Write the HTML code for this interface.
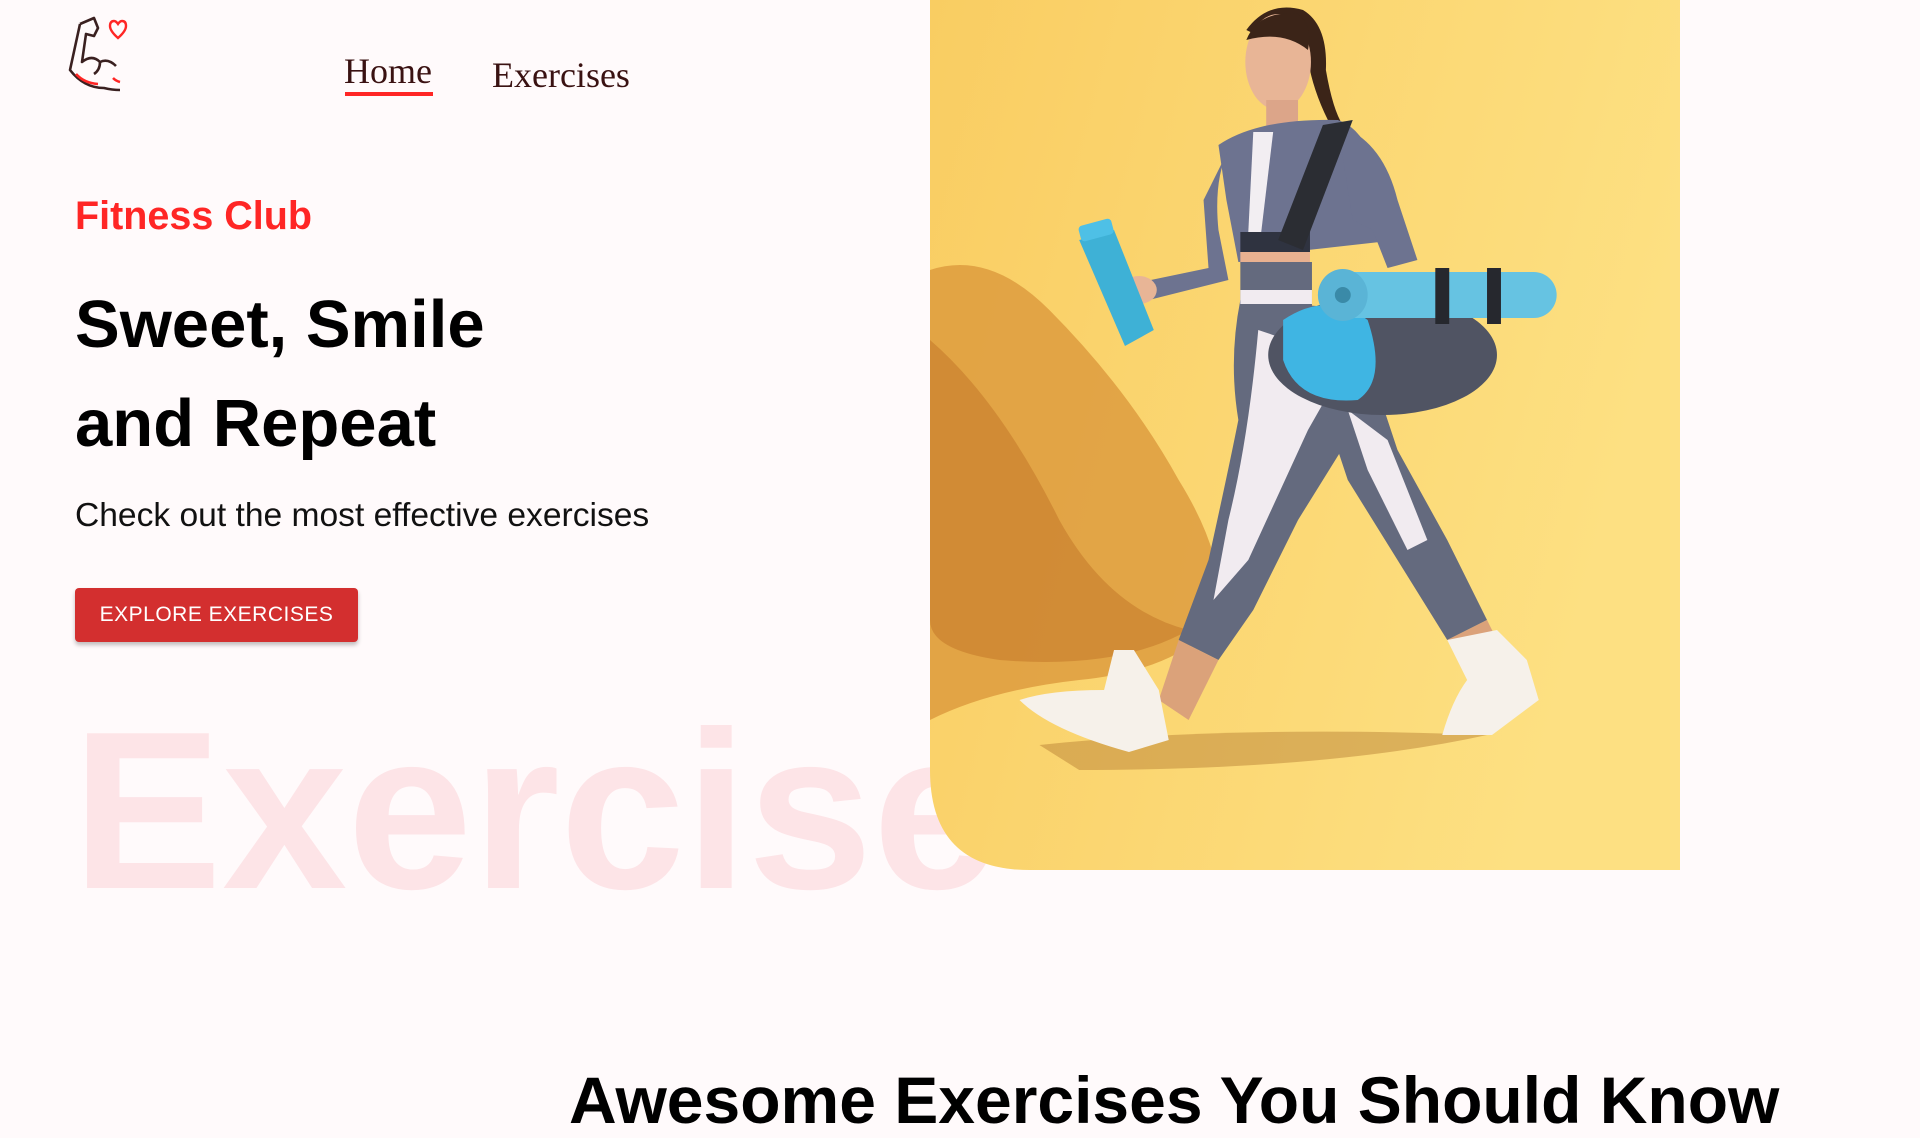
<!DOCTYPE html>
<html><head><meta charset="utf-8"><style>
*{margin:0;padding:0;box-sizing:border-box}
body{width:1920px;height:1080px;overflow:hidden;background:#fffafb;position:relative;font-family:"Liberation Sans",Arial,sans-serif}
.abs{position:absolute}
.nav{font-family:"Liberation Serif",serif;font-size:36px;color:#3a1212}
.btn{left:75px;top:588px;width:283px;height:54px;background:#d32f2f;color:#fff;font-size:21px;border-radius:4px;display:flex;align-items:center;justify-content:center;letter-spacing:.5px;box-shadow:0 3px 4px rgba(0,0,0,.25)}
</style></head><body>
<svg class="abs" style="left:58px;top:16px" width="76" height="76" viewBox="0 0 76 76">
<path d="M22 8 L36 2 L40 12 L36 20 L28 18 L24 46 Q34 38 42 46 Q50 42 58 50" fill="none" stroke="#3a2020" stroke-width="2.6" stroke-linejoin="round"/>
<path d="M42 46 Q42 54 36 58" fill="none" stroke="#3a2020" stroke-width="2.6"/>
<path d="M22 8 L12 54 Q26 72 46 72 Q54 74 62 74" fill="none" stroke="#3a2020" stroke-width="2.6" stroke-linejoin="round"/>
<path d="M18 58 Q26 67 40 68" fill="none" stroke="#ff2625" stroke-width="2.6"/>
<path d="M55 62 Q58 65 62 66" fill="none" stroke="#ff2625" stroke-width="2.6"/>
<path d="M60 22 Q52 15 52 10 Q52 5 56 5 Q58 5 60 8 Q62 5 64 5 Q68 5 68 10 Q68 15 60 22 Z" fill="none" stroke="#ff2625" stroke-width="2.4"/>
</svg>
<div class="abs nav" style="left:344px;top:50px">Home</div>
<div class="abs" style="left:345px;top:92px;width:88px;height:4px;background:#ff2625"></div>
<div class="abs nav" style="left:492px;top:54px">Exercises</div>

<div class="abs" style="left:75px;top:194px;font-size:39.5px;font-weight:bold;color:#ff2625">Fitness Club</div>
<div class="abs" style="left:75px;top:275px;font-size:67px;font-weight:bold;color:#000;line-height:99px">Sweet, Smile<br>and Repeat</div>
<div class="abs" style="left:75px;top:497px;font-size:33.6px;color:#111">Check out the most effective exercises</div>
<div class="abs btn">EXPLORE EXERCISES</div>

<div class="abs" style="left:72px;top:690px;font-size:225px;font-weight:bold;color:#fde4e7;line-height:240px">Exercise</div>

<svg class="abs" style="left:930px;top:0" width="750" height="870" viewBox="0 0 754 870" preserveAspectRatio="none">
<defs>
<clipPath id="c"><path d="M0 0 H754 V870 H100 Q0 870 0 770 Z"/></clipPath>
<linearGradient id="bg" x1="0" y1="0" x2="1" y2="0.3"><stop offset="0" stop-color="#f9cd62"/><stop offset="1" stop-color="#fde082"/></linearGradient>
</defs>
<g clip-path="url(#c)">
<rect width="754" height="870" fill="url(#bg)"/>
<path d="M0 270 Q60 250 120 310 Q200 390 250 480 Q300 560 290 620 Q250 670 150 680 Q60 690 0 720 Z" fill="#dc983c" opacity=".8"/>
<path d="M0 340 Q70 400 130 520 Q180 610 260 630 Q190 670 70 660 Q0 650 0 620Z" fill="#c77c2b" opacity=".6"/>
<path d="M110 745 Q300 725 560 735 Q400 770 150 770Z" fill="#b37a30" opacity=".45"/>
<path d="M318 30 Q340 0 375 10 Q400 25 398 70 Q405 110 415 125 L400 120 Q385 90 380 60Z" fill="#3b2418"/>
<ellipse cx="350" cy="62" rx="33" ry="48" fill="#e8b596"/>
<path d="M318 40 Q330 10 370 14 Q385 25 380 50 Q355 30 318 40Z" fill="#3b2418"/>
<rect x="338" y="100" width="32" height="30" fill="#dca589"/>
<path d="M290 145 Q330 118 410 120 Q440 130 450 180 L470 240 L380 250 L375 260 L310 262 L298 200 Z" fill="#6d7390"/>
<path d="M325 132 L345 132 L333 232 L320 232Z" fill="#f2eef2"/>
<rect x="312" y="232" width="70" height="20" fill="#2f3340"/>
<rect x="312" y="252" width="70" height="12" fill="#e9b190"/>
<path d="M410 125 Q455 140 470 200 L490 260 L460 268 L445 230 L425 220Z" fill="#6d7390"/>
<path d="M395 125 L425 120 L375 250 L350 240Z" fill="#2b2d33"/>
<path d="M300 150 Q285 180 290 230 L300 280 L220 300 L222 280 L280 268 L275 200Z" fill="#6d7390"/>
<ellipse cx="210" cy="290" rx="18" ry="14" fill="#e8b596"/>
<path d="M150 240 L185 230 L225 330 L196 346Z" fill="#3eb1d6"/>
<rect x="150" y="222" width="34" height="16" rx="4" fill="#4ec0e6" transform="rotate(-15 167 230)"/>
<path d="M312 300 L440 310 Q460 400 420 440 L370 520 L325 610 L290 660 L250 640 L280 560 Q300 470 310 420 Q300 360 312 300Z" fill="#646a7e"/>
<path d="M330 330 L420 360 L380 430 L320 560 L285 600 L300 520 Q320 440 330 330Z" fill="#f1ebf0"/>
<path d="M380 360 L440 360 L470 450 L520 540 L560 620 L520 640 L470 560 L420 480Z" fill="#646a7e"/>
<path d="M420 410 L460 440 L500 540 L480 550 L440 470Z" fill="#f1ebf0"/>
<rect x="312" y="262" width="72" height="48" fill="#646a7e"/>
<rect x="312" y="290" width="72" height="14" fill="#f1ebf0"/>
<ellipse cx="455" cy="355" rx="115" ry="60" fill="#505463"/>
<path d="M355 320 Q400 290 440 320 Q460 380 430 400 Q370 405 355 360Z" fill="#3fb5e3"/>
<rect x="390" y="272" width="240" height="46" rx="23" fill="#66c3e2"/>
<ellipse cx="415" cy="295" rx="25" ry="26" fill="#5ab4d6"/>
<ellipse cx="415" cy="295" rx="8" ry="8" fill="#3a8aa8"/>
<rect x="508" y="268" width="14" height="56" fill="#26282e"/>
<rect x="560" y="268" width="14" height="56" fill="#26282e"/>
<path d="M250 640 L290 660 L260 720 L230 700Z" fill="#dba27a"/>
<path d="M520 640 L560 620 L580 660 L545 680Z" fill="#dba27a"/>
<path d="M185 650 L205 650 L230 690 L240 740 L200 752 Q120 730 90 700 Q120 690 175 690Z" fill="#f6f1ea"/>
<path d="M520 640 L570 630 L600 660 L612 700 L565 735 L515 735 Q525 700 540 680Z" fill="#f6f1ea"/>
</g>
</svg>

<div class="abs" style="left:569px;top:1062px;font-size:66px;font-weight:bold;color:#000;white-space:nowrap">Awesome Exercises You Should Know</div>
</body></html>
